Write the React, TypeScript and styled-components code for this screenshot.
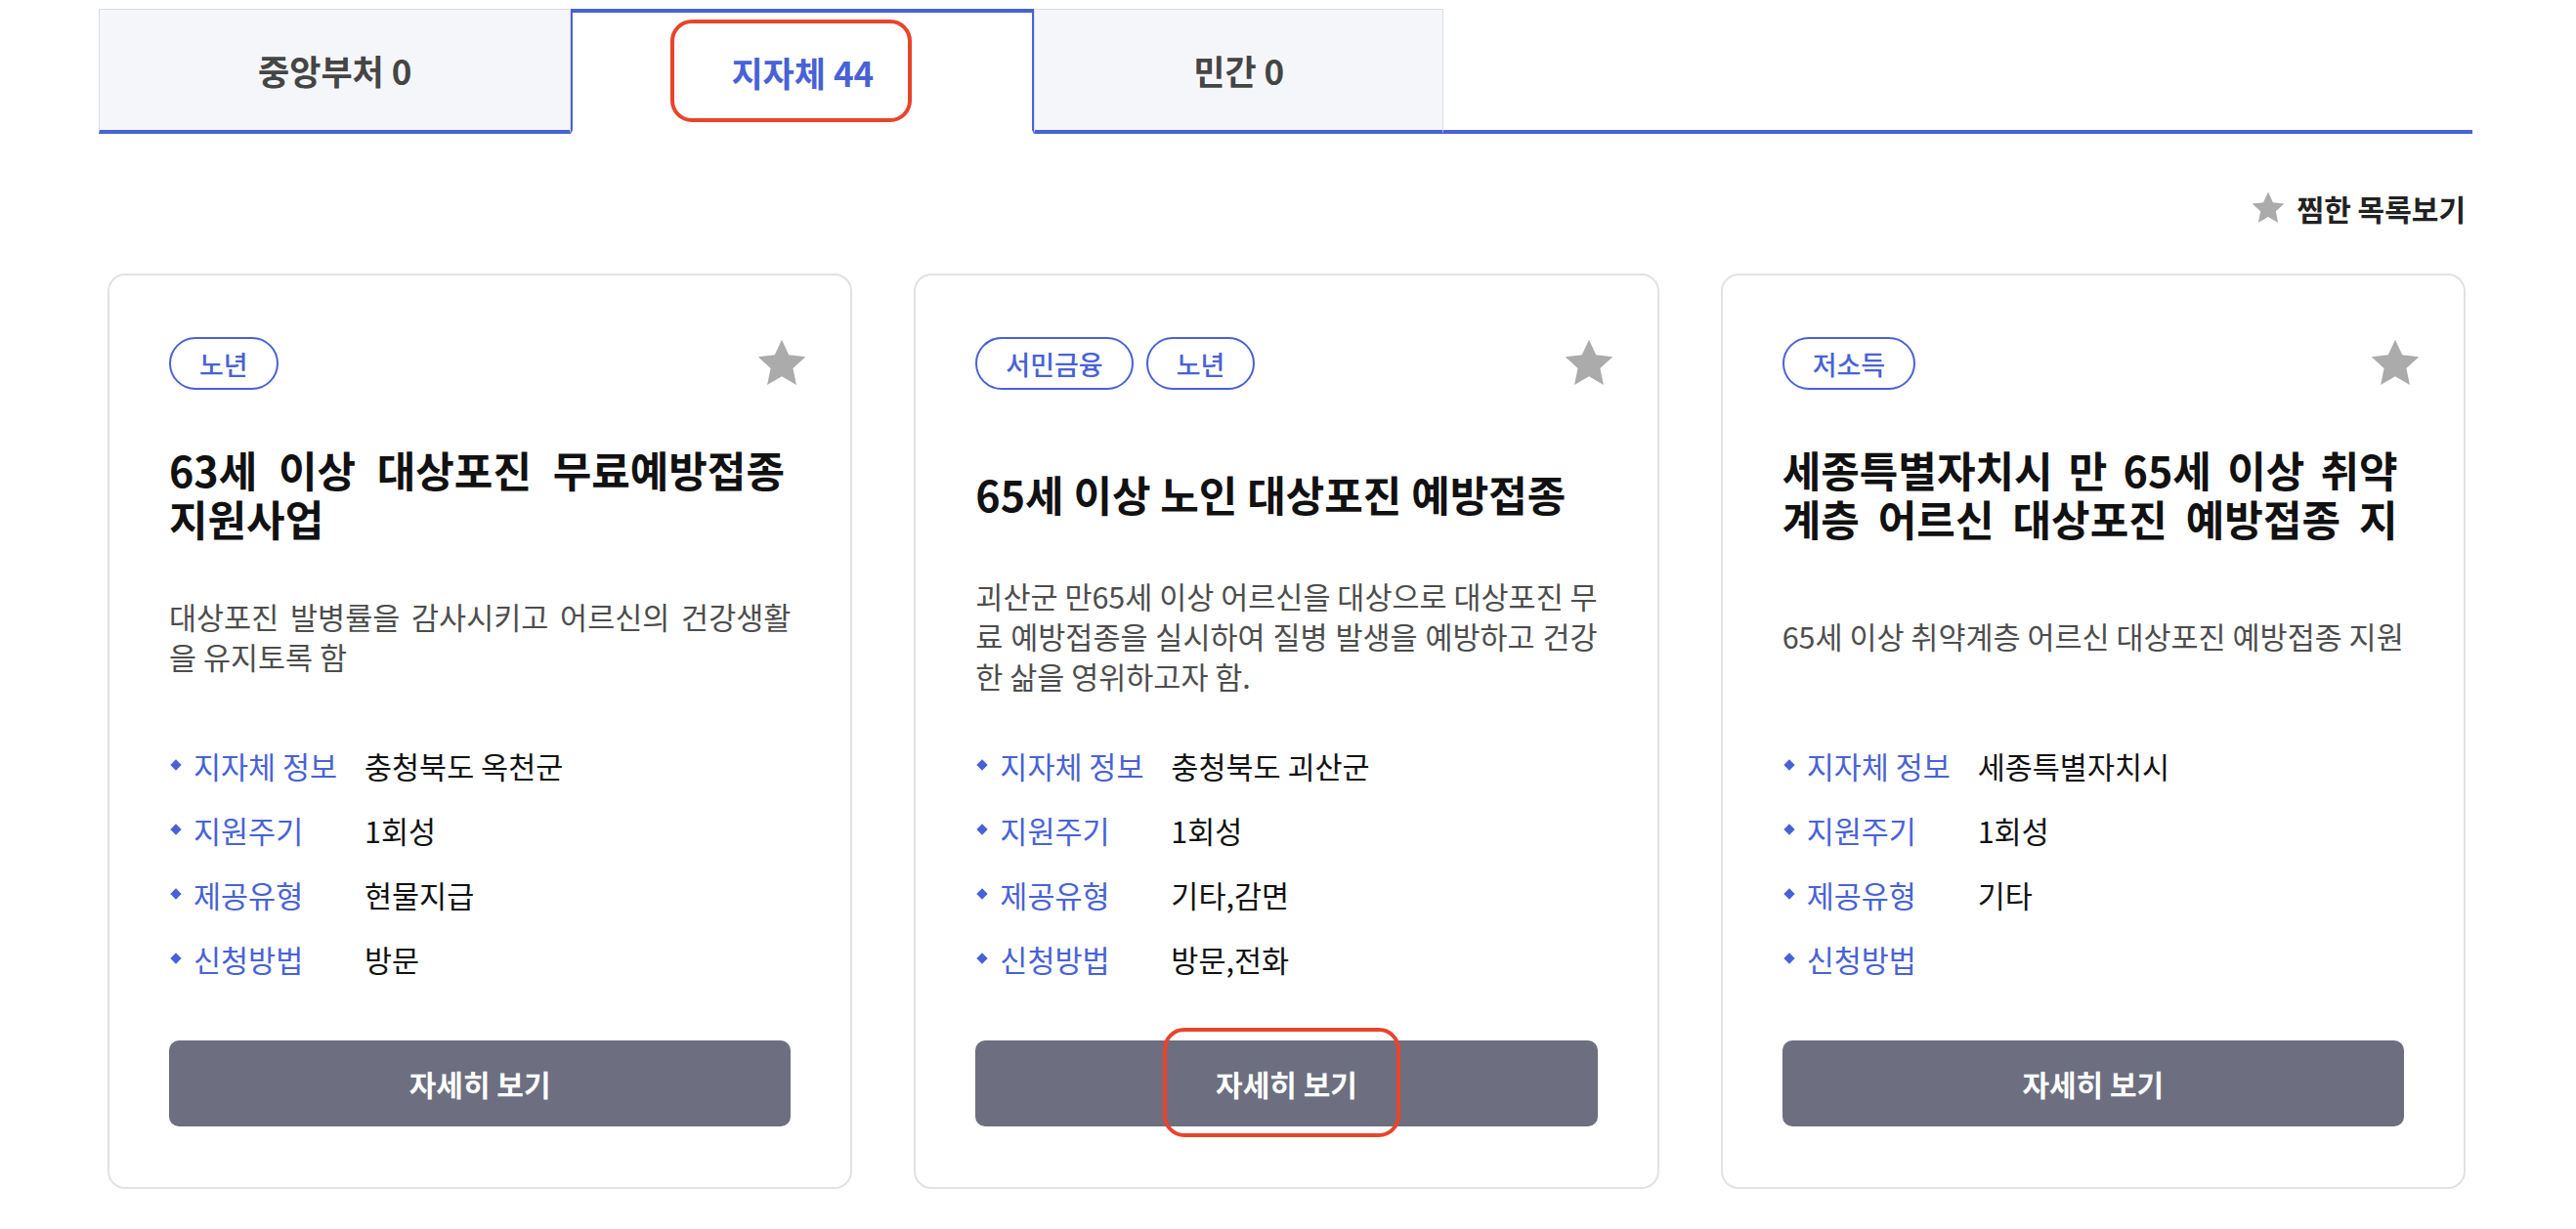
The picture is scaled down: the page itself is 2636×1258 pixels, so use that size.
import React from "react";
import styled, { createGlobalStyle, css } from "styled-components";

const colors = {
  blue: "#4862d6",
  tabBg: "#f5f6fa",
  tabBorder: "#dcdde3",
  cardBorder: "#e2e2e2",
  button: "#6d6f80",
  star: "#ababab",
  mark: "#e8442c",
};

const GlobalStyle = createGlobalStyle`
  body {
    margin: 0;
    background: #fff;
    font-family: "Noto Sans CJK KR", "Noto Sans", sans-serif;
    color: #111;
  }
`;

const Page = styled.div`
  width: 2429px;
  padding: 9px 0 0 101px;
`;

const TabList = styled.div`
  display: flex;
  align-items: flex-end;
`;

const Tab = styled.button<{ $active?: boolean }>`
  position: relative;
  box-sizing: border-box;
  height: 128px;
  padding: 0 162px;
  display: flex;
  align-items: center;
  justify-content: center;
  font-family: inherit;
  font-size: 35px;
  font-weight: 700;
  color: #454545;
  background: ${colors.tabBg};
  border: 1px solid ${colors.tabBorder};
  border-bottom: 4px solid ${colors.blue};
  cursor: pointer;
  ${(p) => p.$active && css`
    color: ${colors.blue};
    background: #fff;
    border: 2px solid ${colors.blue};
    border-top-width: 4px;
    border-bottom: 4px solid #fff;
  `}
`;

const TabFiller = styled.div`
  flex: 1;
  border-bottom: 4px solid ${colors.blue};
`;

const Mark = styled.span<{ $left: number; $top: number; $w: number; $h: number }>`
  position: absolute;
  left: ${(p) => p.$left}px;
  top: ${(p) => p.$top}px;
  width: ${(p) => p.$w}px;
  height: ${(p) => p.$h}px;
  box-sizing: border-box;
  border: 4px solid ${colors.mark};
  border-radius: 22px;
  pointer-events: none;
`;

const FavRow = styled.div`
  display: flex;
  justify-content: flex-end;
  align-items: center;
  gap: 11px;
  height: 40px;
  margin-top: 56px;
  padding-right: 7px;
  font-size: 30px;
  font-weight: 700;
  color: #222;
`;

const CardGrid = styled.div`
  display: grid;
  grid-template-columns: repeat(3, 1fr);
  gap: 63px;
  margin: 47px 7px 0 9px;
`;

const Card = styled.article`
  box-sizing: border-box;
  padding: 63px 61px 62px;
  border: 2px solid ${colors.cardBorder};
  border-radius: 18px;
  background: #fff;
  display: flex;
  flex-direction: column;
`;

const CardHead = styled.div`
  display: flex;
  justify-content: space-between;
  align-items: center;
  height: 54px;
`;

const Tags = styled.div`
  display: flex;
  gap: 13px;
`;

const Tag = styled.span`
  box-sizing: border-box;
  height: 54px;
  padding: 0 29px;
  display: inline-flex;
  align-items: center;
  border: 2px solid ${colors.blue};
  border-radius: 27px;
  font-size: 27px;
  font-weight: 500;
  color: ${colors.blue};
`;

const StarButton = styled.button`
  margin-right: -19px;
  padding: 0;
  border: none;
  background: none;
  display: flex;
  cursor: pointer;
`;

const TitleBox = styled.div`
  height: 112px;
  margin-top: 50px;
  display: flex;
  align-items: center;
`;

// two lines at most; a third line is cut off, as on the live page
const Title = styled.h3`
  box-sizing: border-box;
  margin: 0;
  padding: 6px 0;
  max-width: 630px;
  max-height: 112px;
  overflow: hidden;
  font-size: 43px;
  line-height: 50px;
  font-weight: 700;
  color: #111;
  text-align: justify;
`;

const DescBox = styled.div`
  height: 123px;
  margin-top: 29px;
  display: flex;
  align-items: center;
`;

const Desc = styled.p`
  margin: 0;
  font-size: 30.5px;
  line-height: 41px;
  color: #4d4d4d;
  text-align: justify;
`;

const InfoList = styled.dl`
  margin: 38px 0 0;
  display: grid;
  grid-template-columns: 200px 1fr;
  grid-auto-rows: 66px;
  align-items: center;
  font-size: 30.5px;
  line-height: 42px;
`;

const InfoLabel = styled.dt`
  position: relative;
  padding-left: 25px;
  color: ${colors.blue};

  &::before {
    content: "";
    position: absolute;
    left: 3px;
    top: 50%;
    width: 8px;
    height: 8px;
    margin-top: -5px;
    background: ${colors.blue};
    transform: rotate(45deg);
  }
`;

const InfoValue = styled.dd`
  margin: 0;
  color: #111;
`;

const DetailButton = styled.button`
  position: relative;
  margin-top: 50px;
  height: 88px;
  width: 100%;
  border: none;
  border-radius: 10px;
  background: ${colors.button};
  color: #fff;
  font-family: inherit;
  font-size: 30px;
  font-weight: 700;
  cursor: pointer;
`;

const Star = ({ size }: { size: number }) => (
  <svg width={size} height={size} viewBox="0 0 24 24" style={{ filter: "blur(0.5px)" }}>
    <polygon
      fill={colors.star}
      points="12,1.6 15.1,8.3 22.4,9.1 16.9,14.1 18.4,21.4 12,17.7 5.6,21.4 7.1,14.1 1.6,9.1 8.9,8.3"
    />
  </svg>
);

type Support = {
  tags: string[];
  title: string;
  desc: string;
  info: [string, string][];
  marked?: boolean;
};

const supports: Support[] = [
  {
    tags: ["노년"],
    title: "63세 이상 대상포진 무료예방접종 지원사업",
    desc: "대상포진 발병률을 감사시키고 어르신의 건강생활을 유지토록 함",
    info: [
      ["지자체 정보", "충청북도 옥천군"],
      ["지원주기", "1회성"],
      ["제공유형", "현물지급"],
      ["신청방법", "방문"],
    ],
  },
  {
    tags: ["서민금융", "노년"],
    title: "65세 이상 노인 대상포진 예방접종",
    desc: "괴산군 만65세 이상 어르신을 대상으로 대상포진 무료 예방접종을 실시하여 질병 발생을 예방하고 건강한 삶을 영위하고자 함.",
    info: [
      ["지자체 정보", "충청북도 괴산군"],
      ["지원주기", "1회성"],
      ["제공유형", "기타,감면"],
      ["신청방법", "방문,전화"],
    ],
    marked: true,
  },
  {
    tags: ["저소득"],
    title: "세종특별자치시 만 65세 이상 취약계층 어르신 대상포진 예방접종 지원",
    desc: "65세 이상 취약계층 어르신 대상포진 예방접종 지원",
    info: [
      ["지자체 정보", "세종특별자치시"],
      ["지원주기", "1회성"],
      ["제공유형", "기타"],
      ["신청방법", ""],
    ],
  },
];

const tabs = [
  { label: "중앙부처 0" },
  { label: "지자체 44", active: true },
  { label: "민간 0" },
];

const SupportCard = ({ item }: { item: Support }) => (
  <Card>
    <CardHead>
      <Tags>
        {item.tags.map((t) => (
          <Tag key={t}>{t}</Tag>
        ))}
      </Tags>
      <StarButton aria-label="찜하기">
        <Star size={56} />
      </StarButton>
    </CardHead>
    <TitleBox>
      <Title>{item.title}</Title>
    </TitleBox>
    <DescBox>
      <Desc>{item.desc}</Desc>
    </DescBox>
    <InfoList>
      {item.info.map(([k, v]) => (
        <React.Fragment key={k}>
          <InfoLabel>{k}</InfoLabel>
          <InfoValue>{v}</InfoValue>
        </React.Fragment>
      ))}
    </InfoList>
    <DetailButton>
      자세히 보기
      {item.marked && <Mark $left={192} $top={-13} $w={243} $h={112} />}
    </DetailButton>
  </Card>
);

export default function App() {
  return (
    <>
      <GlobalStyle />
      <Page>
        <TabList>
          {tabs.map((t) => (
            <Tab key={t.label} $active={t.active}>
              {t.label}
              {t.active && <Mark $left={100} $top={7} $w={247} $h={105} />}
            </Tab>
          ))}
          <TabFiller />
        </TabList>
        <FavRow>
          <Star size={38} />
          찜한 목록보기
        </FavRow>
        <CardGrid>
          {supports.map((s) => (
            <SupportCard key={s.title} item={s} />
          ))}
        </CardGrid>
      </Page>
    </>
  );
}
